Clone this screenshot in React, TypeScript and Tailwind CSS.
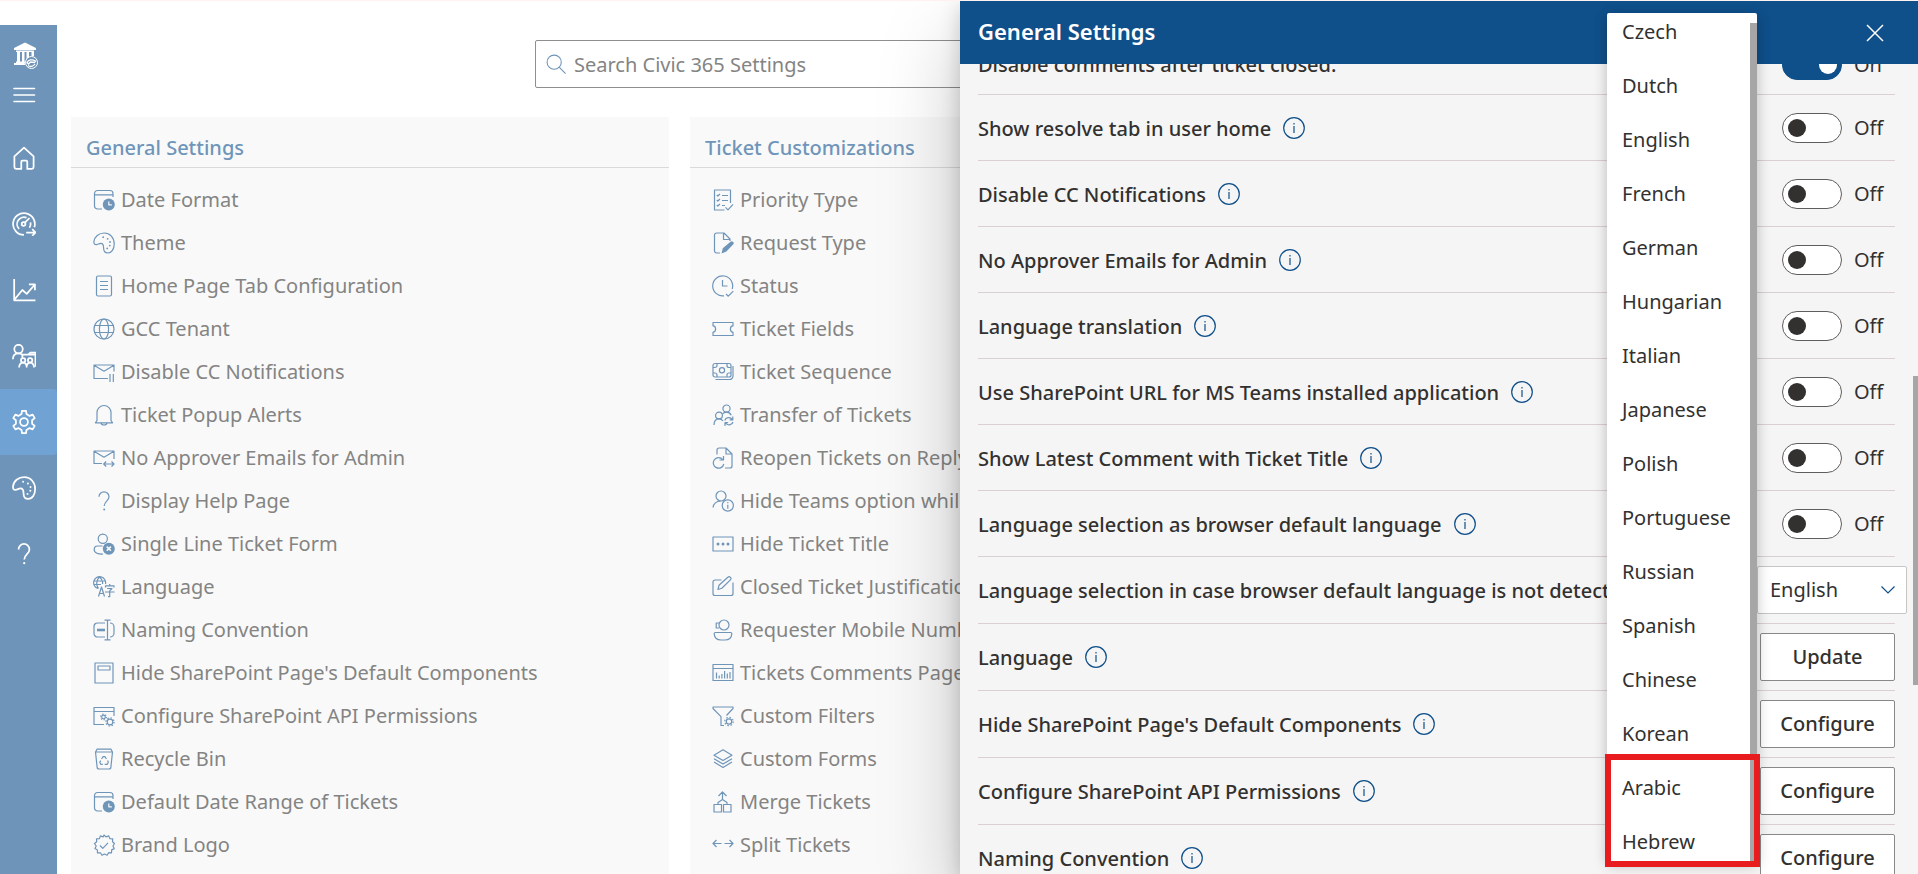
import { useState } from 'react';
import type { ReactNode } from 'react';

type GlyphProps = { size?: string; width?: number; children: ReactNode };

function Glyph({ size = 'size-[22px]', width = 1.2, children }: GlyphProps) {
  return (
    <svg
      viewBox="0 0 22 22"
      className={`${size} shrink-0`}
      fill="none"
      stroke="currentColor"
      strokeWidth={width}
      strokeLinejoin="round"
      aria-hidden="true"
    >
      {children}
    </svg>
  );
}

/* Closed outline of a cog: each tooth is a flat-topped bump between two valleys. */
function cogPath(cx: number, cy: number, outer: number, inner: number, teeth: number) {
  const step = (Math.PI * 2) / teeth;
  const points: string[] = [];
  for (let i = 0; i < teeth; i += 1) {
    const a = i * step - Math.PI / 2;
    const corners: [number, number][] = [
      [-0.29, inner],
      [-0.17, outer],
      [0.17, outer],
      [0.29, inner],
    ];
    corners.forEach(([t, r]) => {
      points.push(`${(cx + r * Math.cos(a + t * step)).toFixed(2)} ${(cy + r * Math.sin(a + t * step)).toFixed(2)}`);
    });
  }
  return `M${points.join('L')}Z`;
}

const dot = (cx: number, cy: number, r = 0.9) => (
  <circle key={`${cx}-${cy}`} cx={cx} cy={cy} r={r} fill="currentColor" stroke="none" />
);

const paletteShape = (
  <>
    <path d="M.9 9.600C1.400 4.600 5.800 1 11.200 1 17 1 21.200 5.600 21.200 12c0 5-2.500 9-6.300 9-3.200 0-4.300-2.200-4.300-5 0-3.200-.9-4.600-2.800-4.600-1.900 0-2.700 1.300-4.600 1.300C1.500 12.700.8 11.400.9 9.600z" />
    {[dot(10.2, 5.2), dot(14.6, 6.8), dot(17, 10), dot(16.8, 13.6), dot(14.2, 16.4)]}
  </>
);

const questionShape = (
  <>
    <path d="M6 6.800a5 5 0 1 1 10 0c0 4.200-4.800 4.400-4.800 9.200" />
    {dot(11.2, 19.4, 1)}
  </>
);

const icons: Record<string, ReactNode> = {
  calendar: (
    <>
      <path d="M9 20H4.500a3 3 0 0 1-3-3V4.500a3 3 0 0 1 3-3H17a3 3 0 0 1 3 3V8M1.500 5.800H20" />
      <circle cx="15.800" cy="15.500" r="6" fill="currentColor" stroke="none" />
      <path d="M15.800 12.400v3.400h3" stroke="#f9f9f9" />
    </>
  ),
  palette: paletteShape,
  page: (
    <>
      <rect x="3.500" y="1" width="15" height="20" rx="1.500" />
      <path d="M7 6.500h8M7 10.500h8M7 14.500h8" />
    </>
  ),
  globe: (
    <>
      <circle cx="11" cy="11" r="10" />
      <ellipse cx="11" cy="11" rx="4.600" ry="10" />
      <path d="M1.600 7.500h18.800M1.600 14.500h18.800" />
    </>
  ),
  mailPause: (
    <>
      <path d="M21 10.500V4H1v13.500h14M1 4.200l10 6 10-6" />
      <path d="M17 13v8M20.300 13v8" />
    </>
  ),
  bell: (
    <>
      <path d="M4 16.500V8.500a7 7 0 0 1 14 0v8l1.600 2.300H2.400z" />
      <path d="M8 18.800c.3 1.500 1.500 2.200 3 2.200s2.700-.7 3-2.200" />
    </>
  ),
  mailArrows: (
    <>
      <path d="M21 12V4H1v12.500h8M1 4.200l10 6 10-6" />
      <path d="M10.800 17h10M13.200 14.500 10.700 17l2.500 2.500M18.500 14.500 21 17l-2.500 2.500" />
    </>
  ),
  question: questionShape,
  personX: (
    <>
      <circle cx="9.800" cy="5.700" r="4.600" />
      <path d="M10 21c-4.500.2-8.800-.8-8.800-4.500 0-2 1.300-3.500 3.300-3.500h5" />
      <circle cx="15.800" cy="15.700" r="6" fill="currentColor" stroke="none" />
      <path d="m13.700 13.600 4.200 4.200M17.900 13.600l-4.200 4.200" stroke="#f9f9f9" strokeWidth="1.600" />
    </>
  ),
  language: (
    <>
      <path d="M12.500 8A6 6 0 1 0 5 12.500M6.500 1c-3.500 3-3.500 8.500-1 11.500M6.500 1C9 3 10 5.500 9.500 8M1 5h11M1 8.500h7" />
      <path d="M5.500 20.500 8.500 11l3 9.500M6.600 17.500h3.900" />
      <path d="M12.500 11.500V9.800h8.500v1.700M16.700 8v1.800M14 12.500h5l-2.300 2.200v6h-1.700M12 16h9.500" />
    </>
  ),
  rename: (
    <>
      <path d="M12 4H4.500A3.500 3.500 0 0 0 1 7.500v7A3.500 3.500 0 0 0 4.500 18H12M17 4a4 4 0 0 1 4 4v6a4 4 0 0 1-4 4M14.500 1.200v19.600M11.500 1.200h6M11.500 20.800h6" />
      <path d="M4 11h8" strokeWidth="2.600" />
    </>
  ),
  pageHeader: (
    <>
      <rect x="2" y="1" width="18" height="20" />
      <rect x="5" y="4" width="12" height="4" />
    </>
  ),
  windowCogs: (
    <>
      <path d="M21 11V2.500H1v17h10M1 6.500h20" />
      <circle cx="10.500" cy="12" r="1.800" />
      <circle cx="10.500" cy="12" r="2.900" strokeDasharray="1.200 1.830" />
      <circle cx="17" cy="17" r="2.800" />
      <circle cx="17" cy="17" r="4.100" strokeDasharray="1.400 1.820" />
    </>
  ),
  recycle: (
    <>
      <path d="m2.500 4 1.600 15a2 2 0 0 0 2 2h9.800a2 2 0 0 0 2-2l1.600-15M2.500 4 4 1.200h14L19.500 4z" />
      <path d="m8.600 11 1.500-2.300h1.800l1.500 2.300M14.600 12.600l.7 1.700-1 2h-2.600M9.800 16.300H7.800l-1-2 .9-1.700" />
    </>
  ),
  badge: (
    <>
      <path d="M11 1l2 1.900 2.800-1 1 2.700 2.900.3-.2 2.900L21.500 9.500 20 12l1.200 2.600-2.500 1.300-.2 2.900-2.900-.1-1.500 2.500L11.500 20 9 21.300l-1.600-2.500-2.900.1-.1-2.900L2 14.600 3.200 12 1.500 9.500 3.700 7.800 3.500 4.900l2.900-.3 1-2.700 2.700 1z" />
      <path d="m7 11.500 2.800 2.800L15 8.800" />
    </>
  ),
  checklist: (
    <>
      <path d="M18.500 14V1h-16v20h10" />
      <path d="m4.800 6 1 1L8 5M4.800 11l1 1L8 10M4.800 16l1 1L8 15M10 6.500h6M10 11.500h6M10 16.500h3" />
      <path d="m13.500 18.300 2.500 2.500 5-5.500" />
    </>
  ),
  docPen: (
    <>
      <path d="M8 21H4.500a2 2 0 0 1-2-2V3a2 2 0 0 1 2-2H12l6 6v2M11.500 1v6.500h6.500" />
      <path d="m9.500 21.500 1.300-5.300 7.400-6.300a1.900 1.900 0 0 1 2.900 2.700l-6.700 7z" fill="currentColor" stroke="none" />
    </>
  ),
  clock: <path d="M20.200 14A10 10 0 1 0 12 20.800M10.500 5v6h5M14 19l2.300 2.200 5-5" />,
  ticket: <path d="M1 4.500h20v3.200c-3.500.8-3.500 5.800 0 6.600v3.200H1v-3.200c3.500-.8 3.500-5.800 0-6.600z" />,
  money: (
    <>
      <rect x="1" y="2.500" width="18" height="13.500" rx="2" />
      <circle cx="10" cy="9.200" r="2.600" />
      <path d="M1 6.500h2a2 2 0 0 0 2-2v-2M19 6.500h-2a2 2 0 0 1-2-2v-2M1 12h2a2 2 0 0 1 2 2v2M19 12h-2a2 2 0 0 0-2 2v2M21 5v10a3.500 3.500 0 0 1-3.500 3.500H3.500" />
    </>
  ),
  transfer: (
    <>
      <circle cx="14.500" cy="4.600" r="3.600" />
      <circle cx="7" cy="11.500" r="3.400" />
      <path d="M2 21c0-4 2-6.200 5-6.200 1.800 0 3 .7 4 2.200M10.500 10c1-1.300 2.400-1.800 4-1.800 2 0 3.700 1 4.700 3" />
      <path d="M12.800 16.500c.8-3.300 5.500-3.800 7.600-1M20.800 12.500v3.300h-3.200M21 18c-.8 3.300-5.500 3.800-7.600 1M13 22v-3.300h3.200" />
    </>
  ),
  reopen: (
    <>
      <path d="M5 7.500V3a2 2 0 0 1 2-2h7l6 6v12a2 2 0 0 1-2 2h-5M14 1v6h6" />
      <path d="M10.800 12.600A5.300 5.300 0 1 0 11.800 17M11.500 9v4H7.500" />
    </>
  ),
  userInfo: (
    <>
      <circle cx="9" cy="6" r="5" />
      <path d="M1 17.500C1.300 13.800 4.500 11 8.500 11" />
      <circle cx="15.800" cy="15.500" r="5.600" />
      <path d="M15.800 14.800v4M15.800 12v1.300" />
    </>
  ),
  dots: (
    <>
      <path d="M1 4h20v14H1z" />
      {[dot(6, 11, 1.5), dot(11, 11, 1.5), dot(16, 11, 1.5)]}
    </>
  ),
  edit: (
    <path d="M9.500 4H3a2 2 0 0 0-2 2v11.500a2 2 0 0 0 2 2h16a2 2 0 0 0 2-2V6.500M6 13.500l1-4.200 8.800-8a1.800 1.800 0 0 1 2.600 2.600l-8.600 8.400z" />
  ),
  headset: (
    <>
      <circle cx="12" cy="6" r="5" />
      <path d="M7.500 4H4.200v5h3M3.500 13.500h15a1.300 1.300 0 0 1 1.300 1.500c-.3 3.600-3 6-6.800 6H9c-3.800 0-6.500-2.400-6.800-6a1.300 1.300 0 0 1 1.300-1.500z" />
    </>
  ),
  chartWindow: (
    <>
      <path d="M1 2.500h20v16H1zM1 6.500h20" />
      <path d="M4.500 16.500v-6M7.200 16.500v-3M9.900 16.500v-4.500M12.600 16.500V9M15.300 16.500v-5M18 16.500V10" />
    </>
  ),
  filterCog: (
    <>
      <path d="M12 20.500H9v-8.800L1 3.500V2h20v1.500l-6.500 7" />
      <circle cx="17" cy="16.500" r="2.700" />
      <circle cx="17" cy="16.500" r="4.200" strokeDasharray="1.500 1.800" />
    </>
  ),
  layers: <path d="m11 1.800 9 5.400-9 5.400-9-5.400zM2 10.700l9 5.400 9-5.400M2 14l9 5.400 9-5.400" />,
  merge: (
    <path d="M2 13.500h7.500V21H2zM11.500 13.500H19V21h-7.500zM10.500 1v8M6.500 5l4-4 4 4M6 13.500v-2l4.500-3 4.500 3v2" />
  ),
  split: <path d="M9.500 9.500H1M4.500 6 1 9.500 4.500 13M12.500 9.500H21M17.500 6l3.500 3.500-3.500 3.500" />,
};

const generalItems: [string, string][] = [
  ['calendar', 'Date Format'],
  ['palette', 'Theme'],
  ['page', 'Home Page Tab Configuration'],
  ['globe', 'GCC Tenant'],
  ['mailPause', 'Disable CC Notifications'],
  ['bell', 'Ticket Popup Alerts'],
  ['mailArrows', 'No Approver Emails for Admin'],
  ['question', 'Display Help Page'],
  ['personX', 'Single Line Ticket Form'],
  ['language', 'Language'],
  ['rename', 'Naming Convention'],
  ['pageHeader', "Hide SharePoint Page's Default Components"],
  ['windowCogs', 'Configure SharePoint API Permissions'],
  ['recycle', 'Recycle Bin'],
  ['calendar', 'Default Date Range of Tickets'],
  ['badge', 'Brand Logo'],
];

const ticketItems: [string, string][] = [
  ['checklist', 'Priority Type'],
  ['docPen', 'Request Type'],
  ['clock', 'Status'],
  ['ticket', 'Ticket Fields'],
  ['money', 'Ticket Sequence'],
  ['transfer', 'Transfer of Tickets'],
  ['reopen', 'Reopen Tickets on Reply'],
  ['userInfo', 'Hide Teams option while'],
  ['dots', 'Hide Ticket Title'],
  ['edit', 'Closed Ticket Justification'],
  ['headset', 'Requester Mobile Number'],
  ['chartWindow', 'Tickets Comments Page'],
  ['filterCog', 'Custom Filters'],
  ['layers', 'Custom Forms'],
  ['merge', 'Merge Tickets'],
  ['split', 'Split Tickets'],
];

const navItems: { label: string; icon: ReactNode; active?: boolean }[] = [
  {
    label: 'Home',
    icon: <path d="M2.200 9.500 11 1.500l8.800 8V19a2 2 0 0 1-2 2H14v-6.500a1 1 0 0 0-1-1H9.500a1 1 0 0 0-1 1V21h-4.300a2 2 0 0 1-2-2z" />,
  },
  {
    label: 'Dashboard',
    icon: (
      <>
        <path d="M20.500 14A10 10 0 1 0 11 21" />
        <path d="M6.500 15.500a6.300 6.300 0 0 1 6.800-10.300M17 9.500a6.500 6.500 0 0 1-1 5" />
        <circle cx="10.600" cy="11" r="1.700" />
        <path d="M11.800 9.800 16 5.500M13 18.800h8.500M18.500 15.800l3 3-3 3" />
      </>
    ),
  },
  {
    label: 'Reports',
    icon: <path d="M2 1v19.500h19.500M2 20 9.500 11l4 3.500L21 6M15.500 5.800H21v5.500" />,
  },
  {
    label: 'Users',
    icon: (
      <>
        <circle cx="6" cy="4.600" r="3.900" />
        <path d="M.8 14c0-3.500 2-5.500 5.200-5.500 1.600 0 2.600.5 3.500 1.500" />
        <path d="M9.500 12.500v-2.700h5.500l1.800-2h4.700v13M15.500 9.800h6" />
        <circle cx="10.200" cy="15" r="2" />
        <circle cx="16.600" cy="15" r="2" />
        <path d="M6.500 21.500c.2-3 1.500-4.500 3.700-4.500s3.200 1.500 3.300 4.500M13.500 20c.3-2 1.400-3 3.100-3 2.200 0 3.400 1.500 3.600 4.500" />
      </>
    ),
  },
  {
    label: 'Settings',
    active: true,
    icon: (
      <>
        <path d={cogPath(11, 11, 10.4, 7.6, 6)} />
        <circle cx="11" cy="11" r="3.600" />
      </>
    ),
  },
  { label: 'Theme', icon: paletteShape },
  { label: 'Help', icon: questionShape },
];

function Sidebar() {
  return (
    <nav aria-label="Main" className="flex w-[57px] shrink-0 flex-col bg-[#6e94ba] text-white">
      <div className="flex h-[100px] flex-col pt-4 pl-3">
        <svg viewBox="0 0 26 30" className="h-[30px] w-[26px]" fill="currentColor" aria-hidden="true">
          <path d="M13 1.500 24 7v2H2V7zM4 9.500h18V11H4zM5 11h3v10H5zM10 11h2.500v10H10zM14.500 11H17v7l-2.500 2zM19.500 11H22v4h-2.500zM4 20.500h9V22H4zM2 22h10.500l1 2H2z" />
          <circle cx="19.500" cy="21.500" r="6" fill="#6e94ba" stroke="currentColor" strokeWidth="1" />
          <path d="M15 21.500c1.500-3 5-3.500 8.500-1.500l-1 1.500-4-.5-2 2zM16 24.500c2 1.500 5 1.500 7-1.500" fill="none" stroke="currentColor" strokeWidth="1.300" />
        </svg>
        <button type="button" aria-label="Toggle navigation" className="mt-4 w-6">
          <svg viewBox="0 0 24 16" className="h-4 w-6" stroke="currentColor" strokeWidth="1.600" strokeLinecap="round" aria-hidden="true">
            <path d="M2 1.500h20.500M2 8h20.500M2 14.500h20.500" />
          </svg>
        </button>
      </div>
      {navItems.map((item) => (
        <a
          key={item.label}
          href="#"
          aria-label={item.label}
          className={`flex h-[66px] shrink-0 items-center rounded-r-sm pl-3 ${item.active ? 'bg-[#70a3d4]' : ''}`}
        >
          <Glyph size="size-6" width={1.6}>
            {item.icon}
          </Glyph>
        </a>
      ))}
    </nav>
  );
}

function SettingsCard({ title, items }: { title: string; items: [string, string][] }) {
  return (
    <section className="min-w-0 bg-[#f9f9f9]">
      <h2 className="flex h-[51px] items-center border-b border-[#dadada] pt-3 pl-[15px] font-medium text-[#6f95b9]">
        {title}
      </h2>
      <ul className="pt-2.5">
        {items.map(([icon, label]) => (
          <li key={label} className="h-[43px]">
            <a href="#" className="flex h-full items-center gap-1.5 pl-[22px] whitespace-nowrap">
              <span className="text-[#6f95b9]">
                <Glyph>{icons[icon]}</Glyph>
              </span>
              <span>{label}</span>
            </a>
          </li>
        ))}
      </ul>
    </section>
  );
}

function InfoIcon() {
  return (
    <button type="button" aria-label="More information" className="text-[#0f4f8a]">
      <Glyph>
        <circle cx="11" cy="11" r="10.300" />
        <path d="M11 9v7M11 6v1.500" />
      </Glyph>
    </button>
  );
}

type Row = { label: string; kind: 'toggle' | 'select' | 'button'; action?: string };

const rows: Row[] = [
  { label: 'Show resolve tab in user home', kind: 'toggle' },
  { label: 'Disable CC Notifications', kind: 'toggle' },
  { label: 'No Approver Emails for Admin', kind: 'toggle' },
  { label: 'Language translation', kind: 'toggle' },
  { label: 'Use SharePoint URL for MS Teams installed application', kind: 'toggle' },
  { label: 'Show Latest Comment with Ticket Title', kind: 'toggle' },
  { label: 'Language selection as browser default language', kind: 'toggle' },
  { label: 'Language selection in case browser default language is not detected', kind: 'select' },
  { label: 'Language', kind: 'button', action: 'Update' },
  { label: "Hide SharePoint Page's Default Components", kind: 'button', action: 'Configure' },
  { label: 'Configure SharePoint API Permissions', kind: 'button', action: 'Configure' },
  { label: 'Naming Convention', kind: 'button', action: 'Configure' },
];

function Toggle({ id, initial }: { id: string; initial: boolean }) {
  const [on, setOn] = useState(initial);
  return (
    <div className="flex w-[113px] items-center gap-3">
      <span className="grid">
        <input
          id={id}
          type="checkbox"
          role="switch"
          checked={on}
          onChange={() => setOn(!on)}
          className="peer col-start-1 row-start-1 h-[30px] w-[60px] appearance-none rounded-full border border-[#605e5c] bg-white checked:border-[#0f4f8a] checked:bg-[#0f4f8a]"
        />
        <span className="pointer-events-none col-start-1 row-start-1 ml-1.5 size-[18px] self-center rounded-full bg-[#323130] peer-checked:mr-[5px] peer-checked:justify-self-end peer-checked:bg-white" />
      </span>
      <span>{on ? 'On' : 'Off'}</span>
    </div>
  );
}

function SettingRow({ row, language }: { row: Row; language: string }) {
  const id = row.label.toLowerCase().replace(/[^a-z]+/g, '-');
  const height = row.kind === 'toggle' ? 'h-[66px]' : 'h-[67px]';
  return (
    <li className={`flex ${height} shrink-0 items-center justify-between border-b border-[#dacfd1]`}>
      <div className="flex items-center gap-3 whitespace-nowrap">
        <label htmlFor={id} className="pt-0.5 font-medium">
          {row.label}
        </label>
        <InfoIcon />
      </div>
      {row.kind === 'toggle' && <Toggle id={id} initial={false} />}
      {row.kind === 'select' && (
        <div className="-mr-3 grid items-center">
          <select
            id={id}
            defaultValue={language}
            className="col-start-1 row-start-1 h-12 w-[150px] appearance-none rounded-xs border border-[#c8c6c4] bg-white pl-3"
          >
            <option>{language}</option>
          </select>
          <svg viewBox="0 0 14 8" className="pointer-events-none col-start-1 row-start-1 mr-3 h-2 w-3.5 justify-self-end" fill="none" stroke="#0f4f8a" strokeWidth="1.200" aria-hidden="true">
            <path d="m.5.5 6.500 6.500L13.500.5" />
          </svg>
        </div>
      )}
      {row.kind === 'button' && (
        <button id={id} type="button" className="h-12 w-[135px] rounded-xs border border-[#8a8886] bg-white font-medium">
          {row.action}
        </button>
      )}
    </li>
  );
}

const languages = [
  'Czech', 'Dutch', 'English', 'French', 'German', 'Hungarian', 'Italian', 'Japanese',
  'Polish', 'Portuguese', 'Russian', 'Spanish', 'Chinese', 'Korean', 'Arabic', 'Hebrew',
];

function LanguageMenu() {
  return (
    <div className="absolute top-3 right-[161px] w-[150px] rounded-xs bg-white shadow-[0_4px_14px_rgba(0,0,0,0.25)]">
      <div role="listbox" aria-label="Language" className="flex flex-col">
        <div className="-mt-2 -mb-2 flex flex-col">
          {languages.map((name) => (
            <button key={name} type="button" role="option" aria-selected={name === 'English'} className="h-[54px] pl-[15px] text-left">
              {name}
            </button>
          ))}
        </div>
      </div>
      <div className="absolute top-[10px] right-0 bottom-0 w-[7px] bg-[#a6a6a6]" />
      <div className="absolute -right-[3px] -bottom-[6px] h-[113px] w-[155px] border-6 border-[#e81b1e]" />
    </div>
  );
}

function Drawer() {
  return (
    <aside
      aria-label="General Settings"
      className="absolute inset-y-0 right-0 flex w-[958px] flex-col bg-[#f5f5f5] text-[#323130] shadow-[0_34px_77px_rgba(0,0,0,0.22),0_6px_19px_rgba(0,0,0,0.18)]"
    >
      <header className="flex h-[63px] shrink-0 items-center justify-between bg-[#0f4f8a] pr-[34px] pl-[18px] text-white">
        <h2 className="pb-1 text-[22px] font-semibold">General Settings</h2>
        <button type="button" aria-label="Close">
          <svg viewBox="0 0 18 18" className="size-[18px]" fill="none" stroke="currentColor" strokeWidth="1.500" aria-hidden="true">
            <path d="m1 1 16 16M17 1 1 17" />
          </svg>
        </button>
      </header>
      <div className="relative min-h-0 flex-1 overflow-hidden pr-[23px] pl-[18px]">
        <ul className="-mt-8 flex flex-col">
          <li className="flex h-[63px] items-center justify-between border-b border-[#dacfd1] pt-1">
            <label htmlFor="disable-comments" className="font-medium">
              Disable comments after ticket closed.
            </label>
            <Toggle id="disable-comments" initial />
          </li>
          {rows.map((row) => (
            <SettingRow key={row.label} row={row} language="English" />
          ))}
        </ul>
        <div className="absolute top-[312px] right-0 h-[309px] w-[5px] bg-[#a6a6a6]" />
      </div>
      <LanguageMenu />
    </aside>
  );
}

export default function App() {
  return (
    <div className="flex h-screen flex-col overflow-hidden border-t border-[#fff3f1] bg-white font-['Noto_Sans','Open_Sans',sans-serif] text-[20px] leading-7 text-[#848483]">
      <div className="relative flex min-h-0 flex-1">
        <div className="flex min-w-0 flex-1 pt-6">
          <Sidebar />
          <main className="flex min-w-0 flex-1 flex-col">
            <div className="mx-auto mt-[15px] flex h-12 w-full max-w-[905px] shrink-0 items-center gap-2 rounded-xs border border-[#8f8f8e] pl-2.5">
              <span className="text-[#6f95b9]">
                <Glyph size="size-5">
                  <circle cx="9" cy="9" r="7.800" />
                  <path d="m14.500 14.500 7 7" />
                </Glyph>
              </span>
              <input
                type="search"
                aria-label="Search settings"
                placeholder="Search Civic 365 Settings"
                className="h-full min-w-0 flex-1 bg-transparent outline-none placeholder:text-[#848483]"
              />
            </div>
            <div className="mt-[29px] grid flex-1 grid-cols-3 gap-[21px] pr-[11px] pl-[14px]">
              <SettingsCard title="General Settings" items={generalItems} />
              <SettingsCard title="Ticket Customizations" items={ticketItems} />
            </div>
          </main>
        </div>
        <Drawer />
      </div>
    </div>
  );
}
